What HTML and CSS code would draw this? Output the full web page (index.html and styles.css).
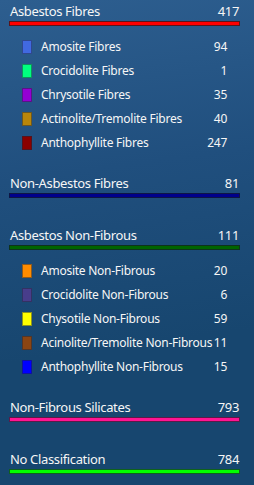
FILE: index.html
```html
<!DOCTYPE html>
<html lang="en">
<head>
  <meta charset="UTF-8" />
  <meta name="viewport" content="width=device-width, initial-scale=1.0" />
  <title>Classification Legend</title>
  <link rel="stylesheet" href="styles.css">
</head>
<body>
  <div class="legend">

    <div class="group">
      <div class="group-head"><span>Asbestos Fibres</span><span>417</span></div>
      <div class="bar bar-red"></div>
      <ul class="items">
        <li><i class="swatch sw-royal"></i><span class="name">Amosite Fibres</span><span class="count">94</span></li>
        <li><i class="swatch sw-spring"></i><span class="name">Crocidolite Fibres</span><span class="count">1</span></li>
        <li><i class="swatch sw-violet"></i><span class="name">Chrysotile Fibres</span><span class="count">35</span></li>
        <li><i class="swatch sw-gold"></i><span class="name">Actinolite/Tremolite Fibres</span><span class="count">40</span></li>
        <li><i class="swatch sw-darkred"></i><span class="name">Anthophyllite Fibres</span><span class="count">247</span></li>
      </ul>
    </div>

    <div class="group">
      <div class="group-head"><span>Non-Asbestos Fibres</span><span>81</span></div>
      <div class="bar bar-navy"></div>
      <ul class="items"></ul>
    </div>

    <div class="group">
      <div class="group-head"><span>Asbestos Non-Fibrous</span><span>111</span></div>
      <div class="bar bar-green"></div>
      <ul class="items">
        <li><i class="swatch sw-orange"></i><span class="name">Amosite Non-Fibrous</span><span class="count">20</span></li>
        <li><i class="swatch sw-slate"></i><span class="name">Crocidolite Non-Fibrous</span><span class="count">6</span></li>
        <li><i class="swatch sw-yellow"></i><span class="name">Chysotile Non-Fibrous</span><span class="count">59</span></li>
        <li><i class="swatch sw-brown"></i><span class="name">Acinolite/Tremolite Non-Fibrous</span><span class="count">11</span></li>
        <li><i class="swatch sw-blue"></i><span class="name">Anthophyllite Non-Fibrous</span><span class="count">15</span></li>
      </ul>
    </div>

    <div class="group">
      <div class="group-head"><span>Non-Fibrous Silicates</span><span>793</span></div>
      <div class="bar bar-pink"></div>
      <ul class="items"></ul>
    </div>

    <div class="group">
      <div class="group-head"><span>No Classification</span><span>784</span></div>
      <div class="bar bar-lime"></div>
      <ul class="items"></ul>
    </div>

  </div>
</body>
</html>
```

FILE: styles.css
```css
* {
  margin: 0;
  padding: 0;
  box-sizing: border-box;
}

html, body {
  height: 100%;
}

body {
  background: linear-gradient(172deg, #2d5e8f 0%, #204f7e 35%, #17466f 70%, #17466f 100%);
  font-family: 'Noto Sans', 'Open Sans', sans-serif;
  font-size: 12px;
  letter-spacing: -0.25px;
  color: #f6f6f6;
  overflow: hidden;
}

.legend {
  padding: 3px 14px 0 9px;
}

.group-head {
  display: flex;
  justify-content: space-between;
  font-size: 13px;
  letter-spacing: -0.35px;
  line-height: 16px;
  padding: 0 1px;
}

.bar {
  height: 5px;
  margin-top: 2px;
  border: 1px solid rgba(20, 30, 40, 0.7);
}

.bar-red { background: #ff0000; }
.bar-navy { background: #00008b; }
.bar-green { background: #006400; }
.bar-pink { background: #ff1493; }
.bar-lime { background: #00ff00; }

.items {
  list-style: none;
  padding: 9px 13px 0 13px;
  margin-bottom: 20px;
}

.items li {
  display: grid;
  grid-template-columns: 10px minmax(0, 1fr) auto;
  column-gap: 9px;
  align-items: center;
  height: 24px;
  line-height: 24px;
}

.swatch {
  display: block;
  width: 10px;
  height: 14px;
  border: 1px solid rgba(30, 40, 60, 0.5);
}

.name {
  white-space: nowrap;
}

.count {
  text-align: right;
}

.sw-royal { background: #4169e1; }
.sw-spring { background: #00ff7f; }
.sw-violet { background: #9400d3; }
.sw-gold { background: #b8860b; }
.sw-darkred { background: #8b0000; }
.sw-orange { background: #ff8c00; }
.sw-slate { background: #483d8b; }
.sw-yellow { background: #ffff00; }
.sw-brown { background: #8b4513; }
.sw-blue { background: #0000ff; }
```
